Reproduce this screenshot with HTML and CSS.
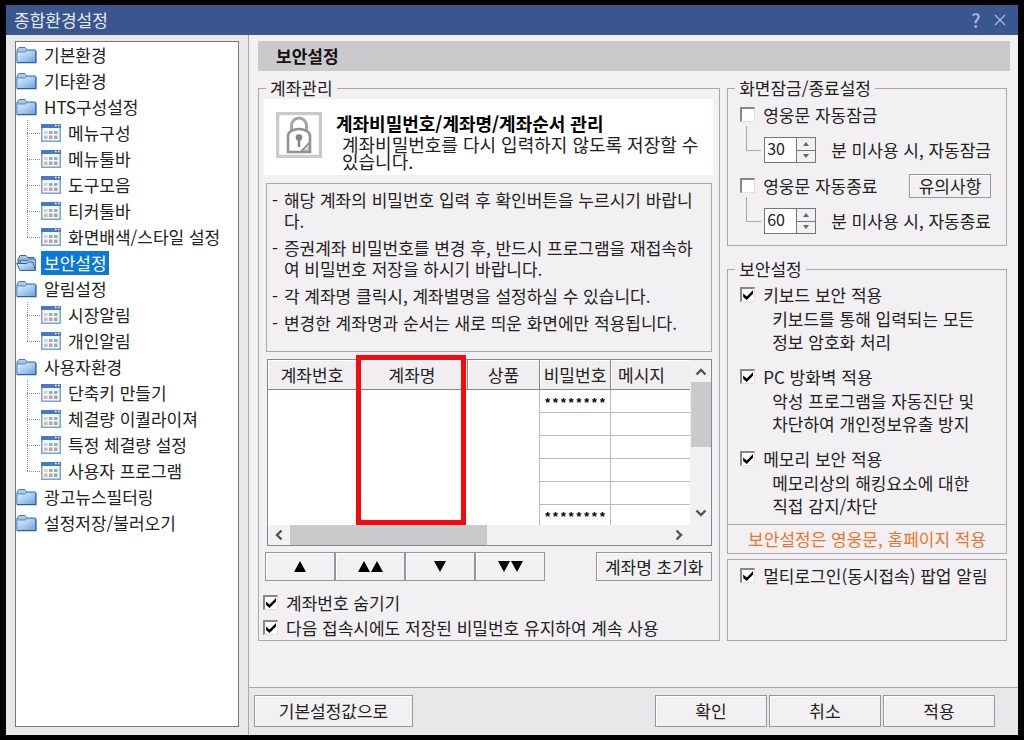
FILE: index.html
```html
<!DOCTYPE html>
<html lang="ko">
<head>
<meta charset="utf-8">
<meta name="viewport" content="width=device-width, initial-scale=1">
<title>종합환경설정</title>
<link rel="stylesheet" href="styles.css">
</head>
<body>
<svg class="defs" aria-hidden="true">
  <defs>
    <linearGradient id="face" x1="0" y1="0" x2="1" y2="1">
      <stop offset="0" stop-color="#e2f1fd"/>
      <stop offset=".5" stop-color="#a9cdf0"/>
      <stop offset="1" stop-color="#6c9fd6"/>
    </linearGradient>
    <linearGradient id="back" x1="0" y1="0" x2="0" y2="1">
      <stop offset="0" stop-color="#b4d3f0"/>
      <stop offset="1" stop-color="#4f82bb"/>
    </linearGradient>
    <symbol id="folder" viewBox="0 0 21 18">
      <path d="M1 4L3 1.500h6l2 2.500h8.500v12.500H1z" fill="url(#back)" stroke="#4278b4"/>
      <path d="M1 6h8l2-1.500h8.500v12H1z" fill="url(#face)" stroke="#5b90c9"/>
      <path d="M1 16.700h19V5" fill="none" stroke="#285f9d" stroke-width="1.200"/>
    </symbol>
    <symbol id="folder-open" viewBox="0 0 21 18">
      <path d="M2 5L4 1.500h6l1.500 2H18v8H2z" fill="url(#back)" stroke="#3569a5"/>
      <path d="M4.500 6.500h7l1.500-1.500h6.500v11h-15z" fill="#a5c9ec" stroke="#3e73af"/>
      <path d="M.7 9.500h10l2-1.500h4l3 8.500H4z" fill="url(#face)" stroke="#33689f"/>
    </symbol>
    <symbol id="sheet" viewBox="0 0 20 18">
      <path d="M.8.800h18.400v16.400H.8z" fill="#f4f9fd" stroke="#78a3d5" stroke-width="1.500"/>
      <path d="M0 0h20v4H0z" fill="#4878cb"/>
      <path d="M14 1.500h1.500M17 1.500h1.500" stroke="#fff" stroke-width="1.500"/>
      <path d="M3 7h3.500v3H3z" fill="#cfd5cf"/><path d="M8 7h3.500v3H8z" fill="#9dabc0"/><path d="M13 7h3.500v3H13z" fill="#8fb79c"/>
      <path d="M3 11.500h3.500v3.500H3z" fill="#dfb4a4"/><path d="M8 11.500h3.500v3.500H8z" fill="#c79cab"/><path d="M13 11.500h3.500v3.500H13z" fill="#a2a99c"/>
    </symbol>
  </defs>
</svg>

<div class="window">
  <header class="titlebar">
    <h1 class="title">종합환경설정</h1>
    <button class="title-btn" type="button" aria-label="도움말">?</button>
    <button class="title-btn" type="button" aria-label="닫기"><svg width="12" height="12" viewBox="0 0 12 12"><path d="M1 1l10 10M11 1L1 11" stroke="currentColor" stroke-width="1.300" fill="none"/></svg></button>
  </header>

  <nav class="sidebar">
    <ul class="tree">
      <li><a class="node" href="#basic"><svg class="folder"><use href="#folder"/></svg><span class="label">기본환경</span></a></li>
      <li><a class="node" href="#etc"><svg class="folder"><use href="#folder"/></svg><span class="label">기타환경</span></a></li>
      <li><a class="node" href="#hts"><svg class="folder"><use href="#folder"/></svg><span class="label">HTS구성설정</span></a>
        <ul class="branch">
          <li><a class="node" href="#menu"><svg class="sheet"><use href="#sheet"/></svg><span class="label">메뉴구성</span></a></li>
          <li><a class="node" href="#menubar"><svg class="sheet"><use href="#sheet"/></svg><span class="label">메뉴툴바</span></a></li>
          <li><a class="node" href="#tools"><svg class="sheet"><use href="#sheet"/></svg><span class="label">도구모음</span></a></li>
          <li><a class="node" href="#ticker"><svg class="sheet"><use href="#sheet"/></svg><span class="label">티커툴바</span></a></li>
          <li><a class="node" href="#style"><svg class="sheet"><use href="#sheet"/></svg><span class="label">화면배색/스타일 설정</span></a></li>
        </ul>
      </li>
      <li><a class="node selected" href="#security" aria-current="page"><svg class="folder"><use href="#folder-open"/></svg><span class="label">보안설정</span></a></li>
      <li><a class="node" href="#alarm"><svg class="folder"><use href="#folder"/></svg><span class="label">알림설정</span></a>
        <ul class="branch">
          <li><a class="node" href="#market"><svg class="sheet"><use href="#sheet"/></svg><span class="label">시장알림</span></a></li>
          <li><a class="node" href="#personal"><svg class="sheet"><use href="#sheet"/></svg><span class="label">개인알림</span></a></li>
        </ul>
      </li>
      <li><a class="node" href="#user"><svg class="folder"><use href="#folder"/></svg><span class="label">사용자환경</span></a>
        <ul class="branch">
          <li><a class="node" href="#shortcut"><svg class="sheet"><use href="#sheet"/></svg><span class="label">단축키 만들기</span></a></li>
          <li><a class="node" href="#equalizer"><svg class="sheet"><use href="#sheet"/></svg><span class="label">체결량 이퀄라이져</span></a></li>
          <li><a class="node" href="#volume"><svg class="sheet"><use href="#sheet"/></svg><span class="label">특정 체결량 설정</span></a></li>
          <li><a class="node" href="#program"><svg class="sheet"><use href="#sheet"/></svg><span class="label">사용자 프로그램</span></a></li>
        </ul>
      </li>
      <li><a class="node" href="#news"><svg class="folder"><use href="#folder"/></svg><span class="label">광고뉴스필터링</span></a></li>
      <li><a class="node" href="#save"><svg class="folder"><use href="#folder"/></svg><span class="label">설정저장/불러오기</span></a></li>
    </ul>
  </nav>

  <main class="main">
    <h2 class="heading">보안설정</h2>
    <div class="columns">
      <fieldset class="group account">
        <legend>계좌관리</legend>
        <div class="banner">
          <svg class="lock" viewBox="0 0 46 46" aria-hidden="true">
            <path d="M1.500 1.500h43v43h-43z" fill="#fff" stroke="#cbc9cc" stroke-width="3.500"/>
            <path d="M15.500 18v-4.500a7.500 7.500 0 0 1 15 0V18" fill="none" stroke="#a5a4a8" stroke-width="3"/>
            <path d="M12 40V24q0-3 3-5 8-4 16 0 3 2 3 5v16z" fill="#fff" stroke="#929195" stroke-width="2.600"/>
            <path d="M25 39.500l8.500-9v9z" fill="#d8d7d9" stroke="#929195" stroke-width="1.800"/>
            <circle cx="23" cy="25.500" r="3.300" fill="#858488"/>
            <path d="M23 26v9" stroke="#858488" stroke-width="2.400"/>
          </svg>
          <div>
            <strong class="banner-title">계좌비밀번호/계좌명/계좌순서 관리</strong>
            <p class="banner-text">계좌비밀번호를 다시 입력하지 않도록 저장할 수<br>있습니다.</p>
          </div>
        </div>
        <ul class="notes">
          <li><span>-</span><p>해당 계좌의 비밀번호 입력 후 확인버튼을 누르시기 바랍니<br>다.</p></li>
          <li><span>-</span><p>증권계좌 비밀번호를 변경 후, 반드시 프로그램을 재접속하<br>여 비밀번호 저장을 하시기 바랍니다.</p></li>
          <li><span>-</span><p>각 계좌명 클릭시, 계좌별명을 설정하실 수 있습니다.</p></li>
          <li><span>-</span><p>변경한 계좌명과 순서는 새로 띄운 화면에만 적용됩니다.</p></li>
        </ul>
        <div class="list">
          <table class="accounts">
            <colgroup><col class="c-num"><col class="c-name"><col class="c-item"><col class="c-pass"><col class="c-msg"></colgroup>
            <thead><tr><th>계좌번호</th><th class="marked">계좌명<span class="frame"></span></th><th>상품</th><th>비밀번호</th><th class="left">메시지</th></tr></thead>
            <tbody>
              <tr><td class="open" rowspan="6"></td><td class="open" rowspan="6"></td><td class="open" rowspan="6"></td><td>********</td><td></td></tr>
              <tr><td></td><td></td></tr>
              <tr><td></td><td></td></tr>
              <tr><td></td><td></td></tr>
              <tr><td></td><td></td></tr>
              <tr class="cut"><td>********</td><td></td></tr>
            </tbody>
          </table>
          <div class="vscroll">
            <svg width="12" height="8" viewBox="0 0 12 8"><path d="M1.500 6.500L6 2l4.500 4.500" class="chev"/></svg>
            <div class="vtrack"><div class="vthumb"></div></div>
            <svg width="12" height="8" viewBox="0 0 12 8"><path d="M1.500 1.500L6 6l4.500-4.500" class="chev"/></svg>
          </div>
          <div class="hscroll">
            <svg width="8" height="12" viewBox="0 0 8 12"><path d="M6.500 1.500L2 6l4.500 4.500" class="chev"/></svg>
            <div class="htrack"><div class="hthumb"></div></div>
            <svg width="8" height="12" viewBox="0 0 8 12"><path d="M1.500 1.500L6 6l-4.500 4.500" class="chev"/></svg>
          </div>
        </div>
        <div class="order">
          <button class="btn step" type="button" aria-label="위로"><svg width="12" height="11"><path d="M6 0l6 11H0z"/></svg></button>
          <button class="btn step" type="button" aria-label="맨 위로"><svg width="25" height="11"><path d="M6 0l6 11H0zM19 0l6 11H13z"/></svg></button>
          <button class="btn step" type="button" aria-label="아래로"><svg width="12" height="11"><path d="M0 0h12L6 11z"/></svg></button>
          <button class="btn step" type="button" aria-label="맨 아래로"><svg width="25" height="11"><path d="M0 0h12L6 11zM13 0h12l-6 11z"/></svg></button>
          <button class="btn reset" type="button">계좌명 초기화</button>
        </div>
        <label class="check"><input type="checkbox" checked>계좌번호 숨기기</label>
        <label class="check"><input type="checkbox" checked>다음 접속시에도 저장된 비밀번호 유지하여 계속 사용</label>
      </fieldset>

      <div class="side">
        <fieldset class="group timer">
          <legend>화면잠금/종료설정</legend>
          <label class="check"><input type="checkbox">영웅문 자동잠금</label>
          <div class="delay">
            <span class="elbow"></span>
            <span class="spin"><input id="lock-min" type="text" inputmode="numeric" value="30"><span class="arrows"><button type="button" aria-label="증가"><svg width="6" height="4"><path d="M3 0l3 4H0z"/></svg></button><button type="button" aria-label="감소"><svg width="6" height="4"><path d="M0 0h6L3 4z"/></svg></button></span></span>
            <label for="lock-min">분 미사용 시, 자동잠금</label>
          </div>
          <div class="pair">
            <label class="check"><input type="checkbox">영웅문 자동종료</label>
            <button class="btn notice" type="button">유의사항</button>
          </div>
          <div class="delay">
            <span class="elbow"></span>
            <span class="spin"><input id="quit-min" type="text" inputmode="numeric" value="60"><span class="arrows"><button type="button" aria-label="증가"><svg width="6" height="4"><path d="M3 0l3 4H0z"/></svg></button><button type="button" aria-label="감소"><svg width="6" height="4"><path d="M0 0h6L3 4z"/></svg></button></span></span>
            <label for="quit-min">분 미사용 시, 자동종료</label>
          </div>
        </fieldset>

        <fieldset class="group security">
          <legend>보안설정</legend>
          <div class="options">
            <div>
              <label class="check"><input type="checkbox" checked>키보드 보안 적용</label>
              <p class="desc">키보드를 통해 입력되는 모든<br>정보 암호화 처리</p>
            </div>
            <div>
              <label class="check"><input type="checkbox" checked>PC 방화벽 적용</label>
              <p class="desc">악성 프로그램을 자동진단 및<br>차단하여 개인정보유출 방지</p>
            </div>
            <div>
              <label class="check"><input type="checkbox" checked>메모리 보안 적용</label>
              <p class="desc">메모리상의 해킹요소에 대한<br>직접 감지/차단</p>
            </div>
          </div>
          <p class="scope">보안설정은 영웅문, 홈페이지 적용</p>
        </fieldset>

        <div class="popup">
          <label class="check"><input type="checkbox" checked>멀티로그인(동시접속) 팝업 알림</label>
        </div>
      </div>
    </div>
  </main>

  <footer class="footer">
    <button class="btn default" type="button">기본설정값으로</button>
    <button class="btn action" type="button">확인</button>
    <button class="btn action" type="button">취소</button>
    <button class="btn action" type="button">적용</button>
  </footer>
</div>
</body>
</html>
```
FILE: styles.css
```css
* { box-sizing: border-box; }

body {
  margin: 0;
  font: 17px/24px "Noto Sans CJK KR", sans-serif;
  color: #222;
  background: #000;
}

button, input { font: inherit; color: inherit; }
p, ul, h1, h2 { margin: 0; padding: 0; }
ul { list-style: none; }
.defs { display: block; width: 0; height: 0; }

.window {
  display: grid;
  grid-template: 30px 1fr 48px / 243px 1fr;
  min-height: 100vh;
  border: solid #000;
  border-width: 5px 6px;
  background: #f2f0f3;
}

/* title bar */
.titlebar {
  grid-column: 1 / -1;
  display: flex;
  align-items: center;
  gap: 4px;
  padding: 0 8px;
  background: #3a568f;
  color: #e3eaf6;
}
.title { flex: 1; font-size: 17px; font-weight: 400; }
.title-btn {
  display: flex;
  align-items: center;
  justify-content: center;
  width: 20px;
  height: 24px;
  padding: 0;
  border: 0;
  background: none;
  color: #a9bbdd;
  font-size: 19px;
  font-weight: 500;
}

/* tree */
.sidebar {
  grid-row: 2 / 4;
  display: flex;
  padding: 6px 9px 8px;
  border-right: 1px solid #aaa8ab;
  background: #e9e7ea;
}
.tree {
  flex: 1;
  border: 1px solid #77757a;
  background: #fff;
}
.node {
  display: flex;
  align-items: center;
  gap: 4px;
  height: 26px;
  color: inherit;
  text-decoration: none;
}
.label { padding: 0 2px 0 3px; white-space: nowrap; }
.folder { width: 21px; height: 18px; }
.sheet { width: 20px; height: 18px; }
.selected .label { background: #0b79d6; color: #fff; }
.branch .node::before {
  content: "";
  width: 14px;
  height: 26px;
  margin: 0 -4px 0 11px;
  background:
    repeating-linear-gradient(#8b898d 0 1px, transparent 1px 2px) 0 0 / 1px 100% no-repeat,
    repeating-linear-gradient(90deg, #8b898d 0 1px, transparent 1px 2px) 0 13px / 100% 1px no-repeat;
}
.branch li:last-child .node::before { background-size: 1px 13px, 100% 1px; }

/* main area */
.main { padding: 6px 8px 40px 9px; }
.heading {
  height: 30px;
  padding-left: 18px;
  background: #ccc9cd;
  color: #111;
  font-size: 17px;
  font-weight: 700;
  line-height: 30px;
}
.columns {
  display: grid;
  grid-template-columns: 463fr 279fr;
  gap: 7px;
  margin: 7px 3px 0 0;
}
.group {
  min-width: 0;
  margin: 0;
  padding: 0;
  border: 1px solid #aaa8ab;
}
.group legend {
  padding: 0 4px;
  line-height: 20px;
}
.account { padding: 1px 7px 0; }

.banner {
  display: flex;
  gap: 14px;
  height: 76px;
  margin: 0 -1px 8px -2px;
  padding: 13px 0 0 12px;
  background: #fff;
}
.lock { flex: none; width: 46px; height: 46px; }
.banner-title { display: block; color: #000; font-size: 18px; line-height: 22px; }
.banner-text {
  padding-left: 6px;
  font-size: 18px;
  line-height: 17px;
  padding-top: 2px;
  white-space: nowrap;
}

.notes {
  display: flex;
  flex-direction: column;
  gap: 6px;
  height: 169px;
  margin-bottom: 7px;
  padding: 5px;
  border: 1px solid #aaa8ab;
}
.notes li {
  display: flex;
  gap: 6px;
  line-height: 21px;
  white-space: nowrap;
}

/* account list */
.list {
  display: grid;
  grid-template-columns: 1fr 22px;
  margin: 0 0 6px 1px;
  border: 1px solid #88868a;
}
.accounts {
  width: 100%;
  table-layout: fixed;
  border-collapse: separate;
  border-spacing: 0;
  background: #fff;
}
.c-num { width: 89px; }
.c-name { width: 111px; }
.c-item { width: 72px; }
.c-pass { width: 71px; }
.c-msg { width: 79px; }
.accounts th {
  height: 30px;
  padding: 0;
  border-right: 1px solid #88868a;
  border-bottom: 1px solid #88868a;
  background: #f0eef1;
  box-shadow: inset 1px 1px #fff;
  font-weight: 400;
}
.accounts .left { padding-left: 7px; border-right: 0; text-align: left; }
.accounts td {
  height: 23px;
  padding: 6px 0 0;
  border-right: 1px solid #bbb9bd;
  border-bottom: 1px solid #bbb9bd;
  color: #000;
  font: 700 13px/14px "Liberation Mono", monospace;
  text-align: center;
}
.accounts td:last-child { border-right: 0; }
.accounts .cut td { height: 20px; border-bottom: 0; }
.accounts .open { border-bottom: 0; border-right-color: transparent; }
.accounts .open:nth-child(3) { border-right-color: #bbb9bd; }
.marked { position: relative; }
.frame {
  position: absolute;
  top: -5px;
  left: -1px;
  right: 1px;
  height: 170px;
  border: 5px solid #f60a0c;
}
.vscroll {
  display: flex;
  flex-direction: column;
  align-items: center;
  gap: 6px;
  padding: 8px 0;
}
.vtrack { flex: 1; width: 20px; }
.vthumb { height: 65px; background: #ccc9cd; }
.hscroll {
  grid-column: 1 / -1;
  display: flex;
  align-items: center;
  gap: 7px;
  height: 20px;
  padding: 0 29px 0 7px;
}
.htrack { flex: 1; height: 20px; }
.hthumb { width: 52%; height: 20px; background: #ccc9cd; }
.chev { fill: none; stroke: #555; stroke-width: 2.4; }

.btn {
  display: flex;
  align-items: center;
  justify-content: center;
  padding: 0;
  border: 1px solid #98969a;
  border-radius: 0;
  background: #f2f0f3;
  box-shadow: inset 1px 1px #fff;
  white-space: nowrap;
}
.order { display: flex; margin: 0 0 9px -1px; }
.step { width: 70px; height: 29px; }
.reset { width: 116px; margin-left: auto; }

.check {
  display: flex;
  align-items: center;
  gap: 8px;
  height: 25px;
  white-space: nowrap;
}
.check input {
  appearance: none;
  width: 15px;
  height: 15px;
  margin: 0;
  border: 1px solid #e1dfe2;
  border-top: 2px solid #88868a;
  border-left: 2px solid #88868a;
  background: #fff;
}
.check input:checked::before {
  content: "";
  display: block;
  width: 10px;
  height: 10px;
  margin: 1px;
  background: #000;
  clip-path: polygon(0 35%, 35% 65%, 100% 0, 100% 35%, 35% 100%, 0 70%);
}
.account .check { margin-left: -3px; }

/* right column */
.side { display: flex; flex-direction: column; }
.timer { height: 168px; padding: 4px 15px 0 12px; }
.timer legend { margin-left: -5px; }
.delay {
  display: flex;
  align-items: center;
  height: 46px;
  white-space: nowrap;
}
.elbow {
  flex: none;
  width: 15px;
  height: 25px;
  margin: 0 3px 24px 6px;
  border: solid #aaa8ab;
  border-width: 0 0 1px 1px;
}
.spin {
  display: flex;
  flex: none;
  width: 52px;
  height: 26px;
  margin-right: 15px;
  border: 1px solid #77757a;
  background: #fff;
}
.spin input {
  flex: 1;
  min-width: 0;
  padding: 0 0 4px 2px;
  border: 0;
  background: none;
  font-size: 16px;
  line-height: 18px;
}
.arrows { display: flex; flex-direction: column; width: 19px; }
.arrows button {
  display: flex;
  flex: 1;
  align-items: center;
  justify-content: center;
  padding: 0;
  border: solid #77757a;
  border-width: 0 0 1px 1px;
  background: #f2f0f3;
}
.arrows button:last-child { border-bottom: 0; }
.arrows path { fill: #666; }
.pair { display: flex; align-items: center; justify-content: space-between; }
.notice { width: 82px; height: 24px; }

.security { margin: 13px 0 5px; }
.security legend { margin-left: 7px; }
.options {
  display: flex;
  flex-direction: column;
  gap: 11px;
  padding: 3px 12px;
}
.desc { padding-left: 32px; line-height: 23px; white-space: nowrap; }
.scope {
  height: 29px;
  margin-top: 4px;
  border-top: 1px solid #aaa8ab;
  color: #ec742b;
  line-height: 27px;
  text-align: center;
}
.popup {
  flex: 1;
  padding: 3px 12px;
  border: 1px solid #aaa8ab;
}

/* footer */
.footer {
  display: flex;
  gap: 2px;
  padding: 7px 23px 8px 5px;
  border-top: 1px solid #aaa8ab;
  background: #e9e7ea;
}
.default { width: 159px; margin-right: auto; }
.action { width: 112px; }
```
